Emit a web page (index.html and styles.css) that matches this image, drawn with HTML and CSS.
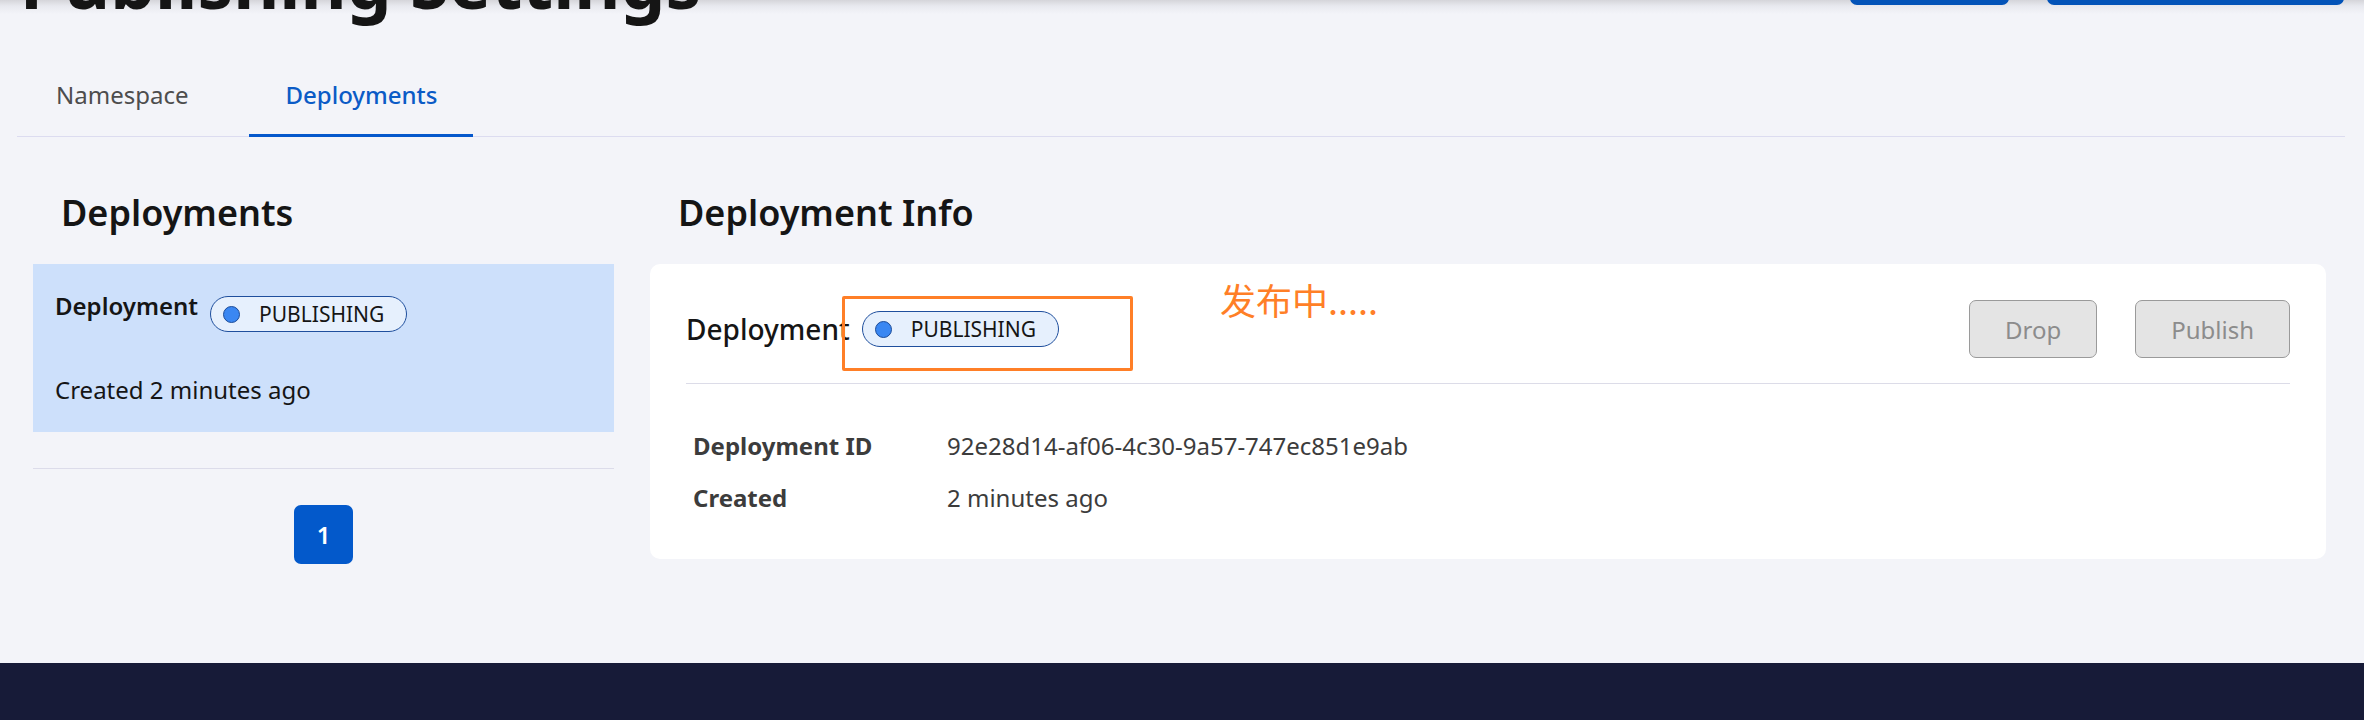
FILE: index.html
```html
<!DOCTYPE html>
<html lang="en">
<head>
<meta charset="utf-8">
<title>Publishing Settings</title>
<link rel="stylesheet" href="styles.css">
</head>
<body>
  <header class="title-bar">
    <h1 class="page-title">Publishing Settings</h1>
    <div class="title-actions">
      <button class="btn-primary btn-a" type="button"></button>
      <button class="btn-primary btn-b" type="button"></button>
    </div>
  </header>

  <nav class="tabs">
    <a class="tab">Namespace</a>
    <a class="tab active">Deployments</a>
  </nav>

  <main class="content">
    <section class="list-col">
      <h2 class="section-title">Deployments</h2>
      <div class="list-item selected">
        <div class="item-head">
          <span class="item-title">Deployment</span>
          <span class="badge"><span class="dot"></span>PUBLISHING</span>
        </div>
        <div class="item-meta">Created 2 minutes ago</div>
      </div>
      <div class="list-footer">
        <button class="page-btn" type="button">1</button>
      </div>
    </section>

    <section class="info-col">
      <h2 class="section-title">Deployment Info</h2>
      <div class="card">
        <div class="card-head">
          <span class="card-title">Deployment</span>
          <span class="badge"><span class="dot"></span>PUBLISHING</span>
          <div class="card-actions">
            <button class="btn-disabled" type="button" disabled>Drop</button>
            <button class="btn-disabled" type="button" disabled>Publish</button>
          </div>
        </div>
        <dl class="info-list">
          <dt>Deployment ID</dt>
          <dd>92e28d14-af06-4c30-9a57-747ec851e9ab</dd>
          <dt>Created</dt>
          <dd>2 minutes ago</dd>
        </dl>
      </div>
    </section>
  </main>

  <footer class="site-footer"></footer>

  <div class="anno-box"></div>
  <div class="anno-text">发布中.....</div>
</body>
</html>
```

FILE: styles.css
```css
* { box-sizing: border-box; }

html, body {
  margin: 0;
  padding: 0;
}

body {
  width: 2364px;
  height: 720px;
  overflow: hidden;
  position: relative;
  background: #f3f4f9;
  color: #151515;
  font-family: "Noto Sans", "Open Sans", sans-serif;
}

/* ---------- title bar (scrolled mostly out of view) ---------- */
.title-bar {
  height: 20px;
  display: flex;
  align-items: flex-end;
  padding: 0 20px 0 17px;
  background: linear-gradient(#d5d5da 0, #e8e9ef 6px, #f3f4f9 14px);
}

.page-title {
  margin: 0 0 3px 3px;
  font-size: 71px;
  font-weight: 700;
  line-height: 1;
  white-space: nowrap;
}

.title-actions {
  margin-left: auto;
  align-self: flex-start;
  margin-top: -55px;
  display: flex;
  gap: 38px;
}

.btn-primary {
  height: 60px;
  border: 0;
  border-radius: 7px;
  background: #0353b8;
}

.btn-a { width: 159px; }
.btn-b { width: 297px; }

/* ---------- tabs ---------- */
.tabs {
  display: flex;
  gap: 25px;
  margin: 37px 19px 0 17px;
  padding-left: 3px;
  box-shadow: inset 0 -1px 0 #dcdcf0;
}

.tab {
  padding: 20px 36px 21px;
  font-size: 24px;
  line-height: 36px;
  color: #4d4d4d;
  border-bottom: 3px solid transparent;
}

.tab.active {
  color: #0b5bc6;
  font-weight: 500;
  border-bottom-color: #0558cc;
}

/* ---------- content ---------- */
.content {
  display: flex;
  gap: 36px;
  padding: 49px 38px 99px 33px;
}

.list-col {
  width: 581px;
  flex: none;
}

.info-col {
  flex: 1;
}

.section-title {
  margin: 0 0 24px;
  padding-left: 28px;
  font-size: 36px;
  font-weight: 600;
  line-height: 54px;
}

/* list item */
.list-item {
  padding: 24px 22px;
}

.list-item.selected {
  background: #cde0fb;
}

.item-head {
  display: flex;
  align-items: flex-start;
  gap: 12px;
}

.item-title {
  font-size: 24px;
  font-weight: 600;
  line-height: 36px;
}

.item-head .badge {
  margin-top: 8px;
}

.item-meta {
  margin-top: 40px;
  font-size: 24px;
  line-height: 36px;
}

/* status badge */
.badge {
  display: inline-flex;
  align-items: center;
  gap: 19px;
  height: 36px;
  padding: 0 22px 0 12px;
  border: 1px solid #1f4f9d;
  border-radius: 18px;
  background: #e6f0fd;
  font-size: 21px;
  line-height: 1;
  color: #151515;
  white-space: nowrap;
}

.dot {
  width: 17px;
  height: 17px;
  border-radius: 50%;
  background: #3a87f2;
  border: 1px solid #1d4c98;
}

/* pagination */
.list-footer {
  margin-top: 36px;
  padding-top: 36px;
  border-top: 1px solid #dcdcea;
  display: flex;
  justify-content: center;
}

.page-btn {
  width: 59px;
  height: 59px;
  border: 0;
  border-radius: 7px;
  background: #0359cb;
  color: #fff;
  font-family: "Noto Sans", "Open Sans", sans-serif;
  font-size: 24px;
  font-weight: 600;
}

/* card */
.card {
  background: #fff;
  border-radius: 10px;
  padding: 36px;
}

.card-head {
  display: flex;
  align-items: center;
  padding-bottom: 25px;
  border-bottom: 1px solid #dcdce8;
}

.card-title {
  font-size: 28px;
  font-weight: 500;
  line-height: 42px;
  margin-right: 12px;
}

.card-actions {
  margin-left: auto;
  display: flex;
  gap: 38px;
}

.btn-disabled {
  height: 58px;
  padding: 0 35px;
  border: 1px solid #9a9a9a;
  border-radius: 7px;
  background: #e4e4e4;
  color: #8c8c8c;
  font-family: "Noto Sans", "Open Sans", sans-serif;
  font-size: 24px;
  font-weight: 400;
}

.info-list {
  display: grid;
  grid-template-columns: 254px 1fr;
  row-gap: 16px;
  margin: 44px 0 7px;
  padding-left: 7px;
  font-size: 24px;
  line-height: 36px;
  color: #3c3c3c;
}

.info-list dt {
  font-weight: 700;
}

.info-list dd {
  margin: 0;
}

/* footer */
.site-footer {
  height: 120px;
  background: #171b38;
}

/* screenshot annotation overlay */
.anno-box {
  position: absolute;
  left: 842px;
  top: 296px;
  width: 291px;
  height: 75px;
  border: 3px solid #ff7f27;
  border-radius: 2px;
}

.anno-text {
  position: absolute;
  left: 1220px;
  top: 281px;
  font-family: "Noto Sans CJK SC", sans-serif;
  font-size: 36px;
  line-height: 1;
  color: #ff7f27;
}
```
